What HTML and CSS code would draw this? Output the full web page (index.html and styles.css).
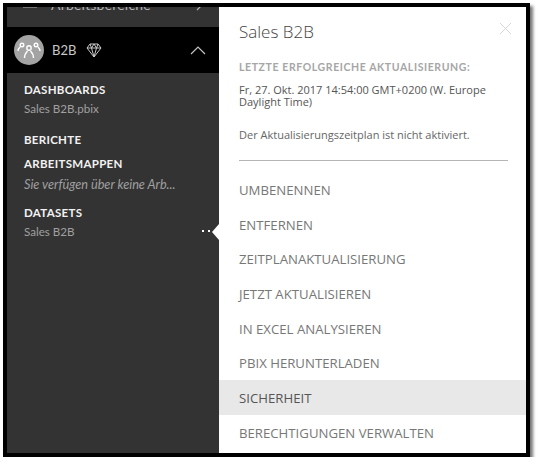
FILE: index.html
```html
<!DOCTYPE html>
<html lang="de">
<head>
    <meta charset="utf-8">
    <title>Sales B2B</title>
    <link rel="stylesheet" href="styles.css">
</head>
<body>
    <div class="frame">
        <nav class="sidebar">
            <div class="workspaces">
                <svg class="workspaces-icon" width="16" height="12" viewBox="0 0 16 12">
                    <path d="M1 0v6h14V0M1 9h14" fill="none" stroke="#b5b5b5" stroke-width="1"/>
                </svg>
                <span class="workspaces-label">Arbeitsbereiche</span>
                <svg class="workspaces-arrow" width="9" height="14" viewBox="0 0 9 14">
                    <path d="M1 1l6 6-6 6" fill="none" stroke="#b5b5b5" stroke-width="1.2"/>
                </svg>
            </div>
            <div class="group-head">
                <span class="avatar">
                    <svg width="24" height="18" viewBox="0 0 24 18">
                        <g fill="none" stroke="#fff" stroke-width="1.4">
                            <circle cx="5" cy="4" r="1.800"/>
                            <circle cx="19" cy="4" r="1.800"/>
                            <circle cx="12" cy="7" r="2.200"/>
                            <path d="M1 10c0-2 1-3 2-4M23 10c0-2-1-3-2-4M7.500 17c0-3 1-5 3-7M16.500 17c0-3-1-5-3-7"/>
                        </g>
                    </svg>
                </span>
                <span class="group-name">B2B</span>
                <svg class="diamond" width="16" height="15" viewBox="0 0 16 15">
                    <path d="M4 1h8l3 4-7 9-7-9zM1 5h14M5.500 5L8 14l2.500-9M4 1l1.500 4L8 1l2.500 4L12 1" fill="none" stroke="#c8c8c8" stroke-width="1"/>
                </svg>
                <svg class="chevron" width="16" height="9" viewBox="0 0 16 9">
                    <path d="M1 8l7-7 7 7" fill="none" stroke="#c4c4c4" stroke-width="1.200"/>
                </svg>
            </div>
            <div class="sections">
                <div class="section section-dash">
                    <h4>DASHBOARDS</h4>
                    <p>Sales B2B.pbix</p>
                </div>
                <div class="section section-rep">
                    <h4>BERICHTE</h4>
                </div>
                <div class="section section-books">
                    <h4>ARBEITSMAPPEN</h4>
                    <p class="empty">Sie verfügen über keine Arb...</p>
                </div>
                <div class="section section-sets">
                    <h4>DATASETS</h4>
                    <p>Sales B2B</p>
                    <span class="dots"><i></i><i></i></span>
                    <span class="pointer"></span>
                </div>
            </div>
        </nav>
        <section class="panel">
            <svg class="close" width="13" height="13" viewBox="0 0 13 13">
                <path d="M1 1l11 11M12 1L1 12" fill="none" stroke="#d6d6d6" stroke-width="1"/>
            </svg>
            <div class="panel-info">
                <h2>Sales B2B</h2>
                <h5>LETZTE ERFOLGREICHE AKTUALISIERUNG:</h5>
                <p class="date">Fr, 27. Okt. 2017 14:54:00 GMT+0200 (W. Europe Daylight Time)</p>
                <p class="plan">Der Aktualisierungszeitplan ist nicht aktiviert.</p>
            </div>
            <ul class="actions">
                <li>UMBENENNEN</li>
                <li>ENTFERNEN</li>
                <li>ZEITPLANAKTUALISIERUNG</li>
                <li>JETZT AKTUALISIEREN</li>
                <li>IN EXCEL ANALYSIEREN</li>
                <li>PBIX HERUNTERLADEN</li>
                <li class="active">SICHERHEIT</li>
                <li>BERECHTIGUNGEN VERWALTEN</li>
            </ul>
        </section>
    </div>
</body>
</html>
```

FILE: styles.css
```css
html, body {
    margin: 0;
    padding: 0;
    background: white;
}

.frame {
    display: flex;
    width: 519px;
    height: 446px;
    margin: 3px 0 0 3px;
    border: 4px solid black;
    box-shadow: 3px 3px 3px #777;
    overflow: hidden;
}

.sidebar {
    width: 212px;
    flex: none;
    background: #333333;
    font-family: "Lato", "Noto Sans", sans-serif;
}

.workspaces {
    display: flex;
    align-items: flex-end;
    height: 20px;
    overflow: hidden;
    padding-left: 15px;
    color: #b5b5b5;
    font-size: 14px;
    line-height: 18px;
}

.workspaces-icon {
    margin-bottom: 17px;
}

.workspaces-label {
    margin-left: 13px;
    margin-bottom: 13px;
    letter-spacing: 0.2px;
}

.workspaces-arrow {
    margin-left: auto;
    margin-right: 14px;
    margin-bottom: 16px;
}

.group-head {
    display: flex;
    align-items: center;
    height: 46px;
    background: black;
    padding: 0 13px 0 7px;
}

.avatar {
    display: flex;
    align-items: center;
    justify-content: center;
    width: 30px;
    height: 30px;
    border-radius: 50%;
    background: #a3a3a3;
}

.group-name {
    margin-left: 8px;
    color: #c8c8c8;
    font-size: 13px;
}

.diamond {
    margin-left: 10px;
}

.chevron {
    margin-left: auto;
}

.sections {
    padding-left: 17px;
}

.section {
    position: relative;
}

.section h4 {
    margin: 0;
    color: #f2f2f2;
    font-size: 11.500px;
    line-height: 16px;
    font-weight: 700;
    letter-spacing: 0.3px;
}

.section p {
    margin: 3px 0 0;
    color: #a0a0a0;
    font-size: 11.600px;
    line-height: 16px;
}

.section p.empty {
    margin-top: 4px;
    font-style: italic;
    font-size: 12.700px;
}

.section-dash {
    padding-top: 9px;
}

.section-rep {
    padding-top: 15px;
}

.section-books {
    padding-top: 8px;
}

.section-sets {
    padding-top: 13px;
}

.dots {
    position: absolute;
    right: 9px;
    bottom: 8px;
    display: flex;
    gap: 4px;
}

.dots i {
    width: 2px;
    height: 2px;
    background: white;
}

.pointer {
    position: absolute;
    right: 0;
    bottom: 0;
    width: 0;
    height: 0;
    border-top: 8px solid transparent;
    border-bottom: 8px solid transparent;
    border-right: 7px solid white;
}

.panel {
    position: relative;
    flex: 1;
    background: white;
    font-family: "Open Sans", "Noto Sans", sans-serif;
}

.close {
    position: absolute;
    top: 15px;
    right: 14px;
}

.panel-info {
    margin: 0 18px 0 20px;
    height: 154px;
    box-sizing: border-box;
    padding-top: 13px;
    border-bottom: 1px solid #b5b5b5;
}

.panel-info h2 {
    margin: 0;
    color: #444444;
    font-size: 17px;
    line-height: 24px;
    font-weight: 300;
}

.panel-info h5 {
    margin: 16px 0 0;
    color: #a6a6a6;
    font-family: "Lato", "Noto Sans", sans-serif;
    font-size: 10.500px;
    line-height: 14px;
    font-weight: 700;
    letter-spacing: 0.6px;
}

.date {
    margin: 10px 0 0;
    color: #555555;
    font-size: 11px;
    line-height: 12px;
}

.plan {
    margin: 20px 0 0;
    color: #666666;
    font-size: 11px;
    line-height: 14px;
}

.actions {
    list-style: none;
    margin: 11px 0 0;
    padding: 0;
}

.actions li {
    box-sizing: border-box;
    height: 34.700px;
    padding-top: 1px;
    line-height: 34.700px;
    padding-left: 20px;
    color: #777777;
    font-size: 13.200px;
    white-space: nowrap;
}

.actions li.active {
    background: #e8e8e8;
    color: #555555;
}
```
